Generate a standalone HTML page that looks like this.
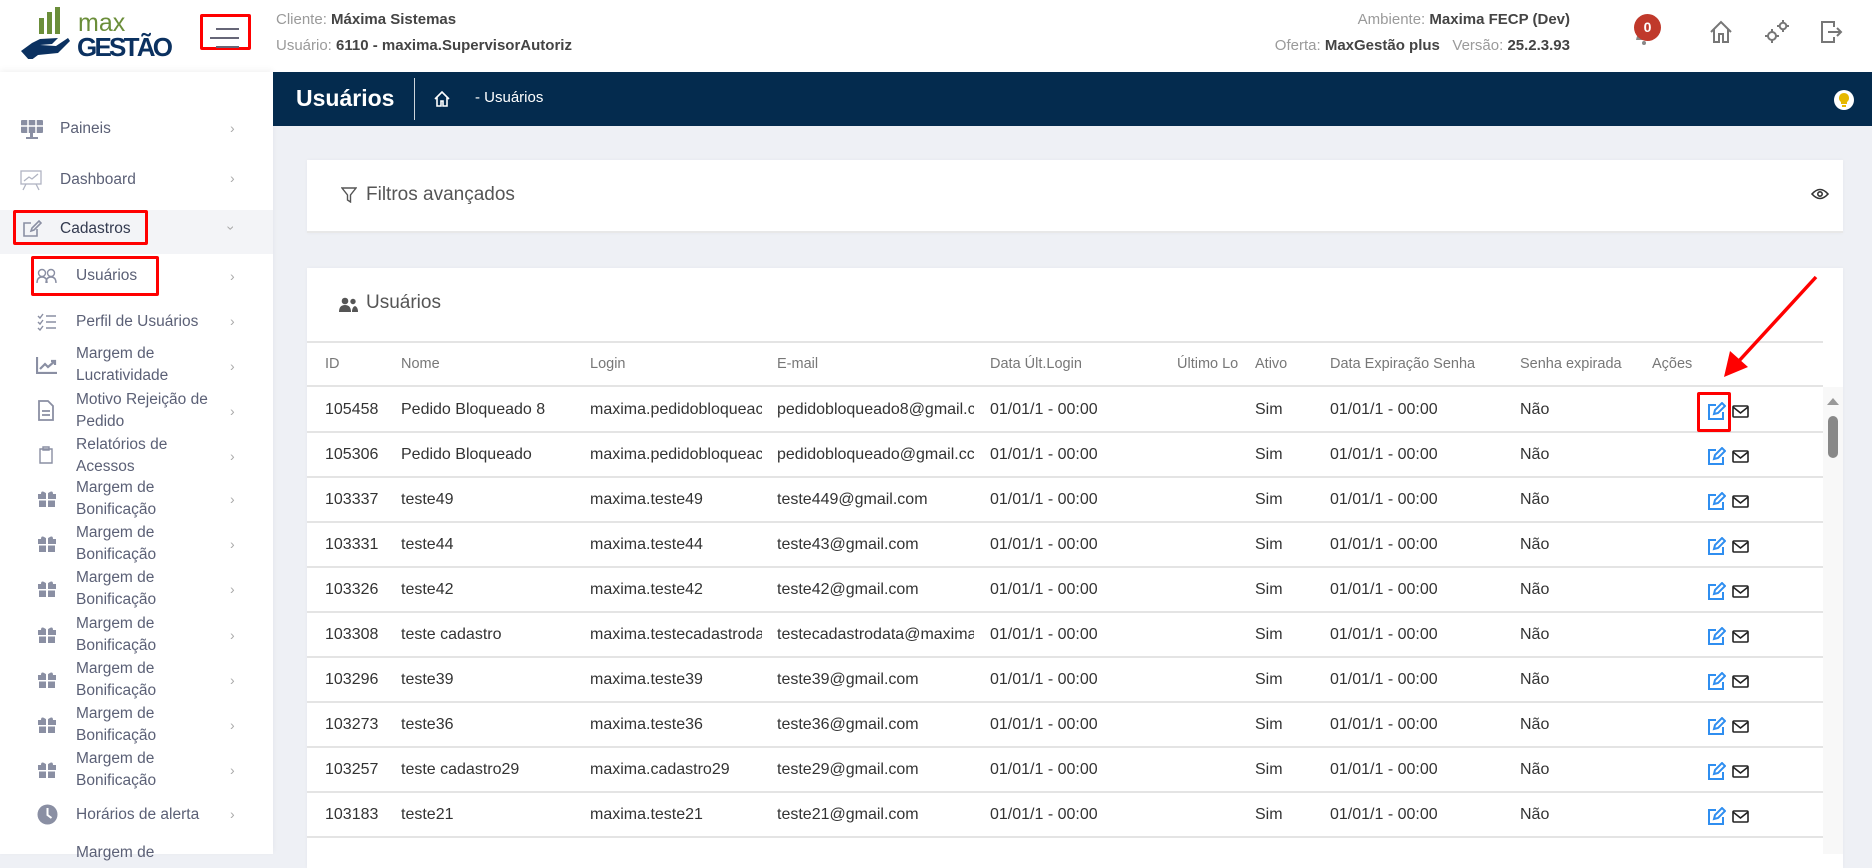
<!DOCTYPE html>
<html><head><meta charset="utf-8">
<style>
*{margin:0;padding:0;box-sizing:border-box}
body{width:1872px;height:854px;overflow:hidden;background:#eef0f5;font-family:"Liberation Sans",sans-serif;position:relative}
.a{position:absolute}
.hdr{left:0;top:0;width:1872px;height:72px;background:#fff}
.side{left:0;top:72px;width:273px;height:782px;background:#fff;box-shadow:0 -2px 6px rgba(0,0,0,.05)}
.bar{left:273px;top:72px;width:1599px;height:54px;background:#042b4e}
.g{color:#9a9a9a}.b{color:#444;font-weight:bold}
.si{font-size:15.5px;color:#5b6076;line-height:22px}
.chev{color:#aaa;font-size:14px}
.card{background:#fff;box-shadow:0 0 4px rgba(0,0,0,.04)}
.th{font-size:14.5px;color:#777;top:356px}
.td{font-size:16px;color:#333}
.line{height:2px;background:#e4e4e4;left:307px;width:1516px}
.red{border:3px solid #f00;border-radius:2px}
</style></head><body>
<div class="a hdr"></div>
<svg class="a" style="left:18px;top:5px" width="160" height="54" viewBox="0 0 160 54">
<rect x="21" y="13" width="5" height="16" fill="#6b8e3a"/><rect x="29" y="7" width="5" height="22" fill="#6b8e3a"/><rect x="37" y="2" width="5" height="27" fill="#6b8e3a"/>
<path d="M3 46 L14 38 L22 34 L40 33 L34 39 L22 40 L38 41 L50 33 L52 36 L40 48 L20 50 L12 56 Z" fill="#0b3160"/>
<text x="60" y="26" font-size="25" fill="#6b8e3a" font-family="Liberation Sans">max</text>
<text x="59" y="51" font-size="26" font-weight="bold" fill="#0b3160" font-family="Liberation Sans" textLength="96">GESTÃO</text>
</svg>
<div class="a red" style="left:200px;top:14px;width:51px;height:36px"></div>
<div class="a" style="left:216px;top:28px;width:23px;height:1.5px;background:#667"></div>
<div class="a" style="left:210px;top:37px;width:29px;height:1.5px;background:#667"></div>
<div class="a" style="left:216px;top:46px;width:23px;height:1.5px;background:#667"></div>
<div class="a" style="left:276px;top:11px;font-size:15px"><span class="g">Cliente: </span><span class="b">Máxima Sistemas</span></div>
<div class="a" style="left:276px;top:37px;font-size:15px"><span class="g">Usuário: </span><span class="b">6110 - maxima.SupervisorAutoriz</span></div>
<div class="a" style="right:302px;top:11px;font-size:15px"><span class="g">Ambiente: </span><span class="b">Maxima FECP (Dev)</span></div>
<div class="a" style="right:302px;top:37px;font-size:15px"><span class="g">Oferta: </span><span class="b">MaxGestão plus</span>&nbsp;&nbsp;&nbsp;<span class="g">Versão: </span><span class="b">25.2.3.93</span></div>
<svg class="a" style="left:1632px;top:22px" width="24" height="26"><path d="M4 18 Q6 8 12 6 Q18 8 20 18 Z" fill="#888"/><circle cx="12" cy="21" r="2" fill="#888"/></svg>
<div class="a" style="left:1634px;top:14px;width:27px;height:27px;border-radius:50%;background:#c0392b;color:#fff;font-size:14px;font-weight:bold;text-align:center;line-height:27px">0</div>
<svg class="a" style="left:1708px;top:19px" width="26" height="26" viewBox="0 0 26 26" fill="none" stroke="#777" stroke-width="2"><path d="M3 13 L13 3 L23 13 M6 10 V23 H11 V15 H15 V23 H20 V10"/></svg>
<svg class="a" style="left:1762px;top:16px" width="30" height="30" viewBox="0 0 30 30" fill="none" stroke="#777" stroke-width="2"><circle cx="10" cy="20" r="4"/><circle cx="21" cy="10" r="3.3"/><path d="M10 13v3M10 24v3M3 20h3M14 20h3M21 4v2.5M21 13.5v2.5M15 10h2.5M24.5 10h2.5"/></svg>
<svg class="a" style="left:1818px;top:19px" width="26" height="26" viewBox="0 0 26 26" fill="none" stroke="#777" stroke-width="2"><path d="M16 8V3H4V23H16V18M10 13H23M19 9L23 13L19 17"/></svg>

<div class="a side"></div>
<div class="a" style="left:0;top:210px;width:273px;height:44px;background:#f3f4f7"></div>
<svg class="a" style="left:20px;top:119px" width="24" height="22" viewBox="0 0 24 22" fill="#8a8fa3"><rect x="1" y="1" width="22" height="13" rx="1"/><path d="M8 1v13M16 1v13M1 7h22" stroke="#fff" stroke-width="1.5"/><rect x="10" y="14" width="3" height="4"/><rect x="6" y="18" width="12" height="2"/></svg>
<div class="a si" style="left:60px;top:118px">Paineis</div><div class="a chev" style="left:230px;top:120px">›</div>
<svg class="a" style="left:19px;top:168px" width="24" height="24" viewBox="0 0 24 24" fill="none" stroke="#b0b4c2" stroke-width="1.3"><rect x="2" y="3" width="20" height="13"/><path d="M5 13l5-4 3 2 6-5M7 16l-3 6M17 16l3 6"/></svg>
<div class="a si" style="left:60px;top:169px">Dashboard</div><div class="a chev" style="left:230px;top:170px">›</div>
<svg class="a" style="left:22px;top:219px" width="20" height="20" viewBox="0 0 20 20" fill="none" stroke="#8a8fa3" stroke-width="1.6"><path d="M15 10v7H2V4h7M9 12l1-3 7-7 2 2-7 7z"/></svg>
<div class="a si" style="left:60px;top:218px;color:#333a4f">Cadastros</div><div class="a chev" style="left:229px;top:220px;transform:rotate(90deg)">›</div>
<div class="a red" style="left:13px;top:210px;width:135px;height:35px"></div>
<svg class="a" style="left:36px;top:268px" width="22" height="16" viewBox="0 0 22 16" fill="none" stroke="#8a8fa3" stroke-width="1.4"><circle cx="6" cy="5" r="3.5"/><circle cx="15" cy="5" r="3.5"/><path d="M1 15q0-6 5-6t5 6M10 15q0-6 5-6t5 6"/></svg>
<div class="a si" style="left:76px;top:265px;color:#5b6076">Usuários</div><div class="a chev" style="left:230px;top:268px">›</div>
<div class="a red" style="left:31px;top:256px;width:128px;height:40px"></div>
<svg class="a" style="left:37px;top:313px" width="20" height="18" viewBox="0 0 20 18" fill="none" stroke="#8a8fa3" stroke-width="1.4"><path d="M1 3l2 2 3-4M1 9l2 2 3-4M1 15l2 2 3-4M9 3h10M9 9h10M9 15h10"/></svg>
<div class="a si" style="left:76px;top:311px">Perfil de Usuários</div><div class="a chev" style="left:230px;top:313px">›</div>
<svg class="a" style="left:36px;top:356px" width="22" height="18" viewBox="0 0 22 18" fill="none" stroke="#8a8fa3" stroke-width="2.2"><path d="M1 1v16h20M4 13l5-5 3 3 7-6M15 5h4v4"/></svg>
<div class="a si" style="left:76px;top:343px">Margem de<br>Lucratividade</div><div class="a chev" style="left:230px;top:358px">›</div>
<svg class="a" style="left:38px;top:400px" width="16" height="21" viewBox="0 0 16 21" fill="none" stroke="#8a8fa3" stroke-width="1.8"><path d="M1 1h9l5 5v14H1zM4 11h8M4 15h8"/></svg>
<div class="a si" style="left:76px;top:389px">Motivo Rejeição de<br>Pedido</div><div class="a chev" style="left:230px;top:403px">›</div>
<svg class="a" style="left:39px;top:446px" width="14" height="18" viewBox="0 0 14 18" fill="none" stroke="#8a8fa3" stroke-width="1.4"><path d="M1 3h12v14H1zM4 1h6v3H4z"/></svg>
<div class="a si" style="left:76px;top:434px">Relatórios de<br>Acessos</div><div class="a chev" style="left:230px;top:448px">›</div>
<div id="gifts"></div>
<svg class="a" style="left:37px;top:804px" width="21" height="21" viewBox="0 0 21 21"><circle cx="10.5" cy="10.5" r="10" fill="#8a8fa3"/><path d="M10.5 4v7l4 3" stroke="#fff" stroke-width="2" fill="none"/></svg>
<div class="a si" style="left:76px;top:804px">Horários de alerta</div><div class="a chev" style="left:230px;top:806px">›</div>
<div class="a si" style="left:76px;top:842px">Margem de</div>

<div class="a bar"></div>
<div class="a" style="left:296px;top:85px;color:#fff;font-size:23px;font-weight:bold">Usuários</div>
<div class="a" style="left:414px;top:78px;width:1px;height:42px;background:#fff;opacity:.8"></div>
<svg class="a" style="left:434px;top:91px" width="16" height="16" viewBox="0 0 16 16" fill="none" stroke="#fff" stroke-width="1.6"><path d="M1 8L8 1L15 8M3 6v9h4v-5h2v5h4V6"/></svg>
<div class="a" style="left:475px;top:89px;color:#fff;font-size:15px">- Usuários</div>
<div class="a" style="left:1834px;top:90px;width:20px;height:20px;border-radius:50%;background:#fff"></div>
<svg class="a" style="left:1838px;top:92px" width="12" height="16" viewBox="0 0 12 16"><path d="M6 1a5 5 0 0 0-3 9v2h6v-2a5 5 0 0 0-3-9z" fill="#e6b800"/><rect x="4" y="13" width="4" height="2" fill="#e6b800"/></svg>

<div class="a card" style="left:307px;top:160px;width:1536px;height:73px;border-bottom:2px solid #e8e8e8"></div>
<svg class="a" style="left:341px;top:187px" width="16" height="16" viewBox="0 0 16 16" fill="none" stroke="#555" stroke-width="1.4"><path d="M1 1h14L9.5 8v7l-3-2V8z"/></svg>
<div class="a" style="left:366px;top:184px;font-size:19px;color:#555">Filtros avançados</div>
<svg class="a" style="left:1811px;top:187px" width="18" height="14" viewBox="0 0 18 14" fill="none" stroke="#333" stroke-width="1.6"><path d="M1 7q8-9 16 0q-8 9-16 0z"/><circle cx="9" cy="7" r="2.2"/></svg>

<div class="a card" style="left:307px;top:268px;width:1536px;height:600px"></div>
<svg class="a" style="left:339px;top:297px" width="19" height="15" viewBox="0 0 19 15" fill="#555"><circle cx="6" cy="4" r="3.3"/><circle cx="14" cy="4.5" r="2.7"/><path d="M0 15q0-7 6-7t6 7zM13 15q0-5 3-6 3 1 3 6z"/></svg>
<div class="a" style="left:366px;top:292px;font-size:19px;color:#555">Usuários</div>
<div class="a line" style="top:341px"></div>
<div class="a th" style="left:325px">ID</div>
<div class="a th" style="left:401px">Nome</div>
<div class="a th" style="left:590px">Login</div>
<div class="a th" style="left:777px">E-mail</div>
<div class="a th" style="left:990px">Data Últ.Login</div>
<div class="a th" style="left:1177px">Último Lo</div>
<div class="a th" style="left:1255px">Ativo</div>
<div class="a th" style="left:1330px">Data Expiração Senha</div>
<div class="a th" style="left:1520px">Senha expirada</div>
<div class="a th" style="left:1652px">Ações</div>
<div class="a line" style="top:385px"></div>
<div id="rows"></div>
<div class="a" style="left:1823px;top:387px;width:20px;height:467px;background:#f8f8f8"></div>
<svg class="a" style="left:1826px;top:396px" width="14" height="10"><path d="M1 9L7 2L13 9Z" fill="#999"/></svg>
<div class="a" style="left:1828px;top:416px;width:10px;height:42px;border-radius:5px;background:#888"></div>

<div class="a red" style="left:1697px;top:392px;width:34px;height:40px"></div>
<svg class="a" style="left:0;top:0" width="1872" height="854"><line x1="1816" y1="277" x2="1738" y2="362" stroke="#f00" stroke-width="3.5"/><path d="M1724 377 L1730 351 L1748 367 Z" fill="#f00"/></svg>

<script>
var g='';
for(var i=0;i<7;i++){var y=481+i*45.2;
g+='<svg class="a" style="left:37px;top:'+(y+8)+'px" width="20" height="18" viewBox="0 0 20 18" fill="#8a8fa3"><path d="M4 5q0-5 6 0q6-5 6 0z"/><rect x="1" y="5" width="18" height="5"/><rect x="2" y="11" width="16" height="7"/><rect x="9" y="4" width="2" height="14" fill="#fff"/><rect x="1" y="10" width="18" height="1.5" fill="#fff"/></svg>';
g+='<div class="a si" style="left:76px;top:'+(y-4)+'px">Margem de<br>Bonificação</div><div class="a chev" style="left:230px;top:'+(y+10)+'px">›</div>';}
document.getElementById('gifts').outerHTML=g;
var d=[["105458","Pedido Bloqueado 8","maxima.pedidobloqueac","pedidobloqueado8@gmail.c"],["105306","Pedido Bloqueado","maxima.pedidobloqueac","pedidobloqueado@gmail.cc"],["103337","teste49","maxima.teste49","teste449@gmail.com"],["103331","teste44","maxima.teste44","teste43@gmail.com"],["103326","teste42","maxima.teste42","teste42@gmail.com"],["103308","teste cadastro","maxima.testecadastroda","testecadastrodata@maxima"],["103296","teste39","maxima.teste39","teste39@gmail.com"],["103273","teste36","maxima.teste36","teste36@gmail.com"],["103257","teste cadastro29","maxima.cadastro29","teste29@gmail.com"],["103183","teste21","maxima.teste21","teste21@gmail.com"]];
var h='';
for(var i=0;i<d.length;i++){var y=401+i*45;var r=d[i];
h+='<div class="a td" style="left:325px;top:'+y+'px">'+r[0]+'</div>';
h+='<div class="a td" style="left:401px;top:'+y+'px">'+r[1]+'</div>';
h+='<div class="a td" style="left:590px;top:'+y+'px;width:172px;overflow:hidden;white-space:nowrap">'+r[2]+'</div>';
h+='<div class="a td" style="left:777px;top:'+y+'px;width:197px;overflow:hidden;white-space:nowrap">'+r[3]+'</div>';
h+='<div class="a td" style="left:990px;top:'+y+'px">01/01/1 - 00:00</div>';
h+='<div class="a td" style="left:1255px;top:'+y+'px">Sim</div>';
h+='<div class="a td" style="left:1330px;top:'+y+'px">01/01/1 - 00:00</div>';
h+='<div class="a td" style="left:1520px;top:'+y+'px">Não</div>';
h+='<svg class="a" style="left:1707px;top:'+(y+1)+'px" width="19" height="19" viewBox="0 0 19 19" fill="none" stroke="#2f8ef0" stroke-width="2"><path d="M9 3H2v14h14v-7M7 12l1-4 7-7 3 3-7 7z"/></svg>';
h+='<svg class="a" style="left:1732px;top:'+(y+4)+'px" width="17" height="13" viewBox="0 0 17 13" fill="none" stroke="#222" stroke-width="1.6"><rect x="1" y="1" width="15" height="11" rx="1"/><path d="M1 2l7.5 6 7.5-6"/></svg>';
h+='<div class="a line" style="top:'+(y+30)+'px;width:1516px"></div>';}
document.getElementById('rows').outerHTML=h;
</script>
</body></html>
